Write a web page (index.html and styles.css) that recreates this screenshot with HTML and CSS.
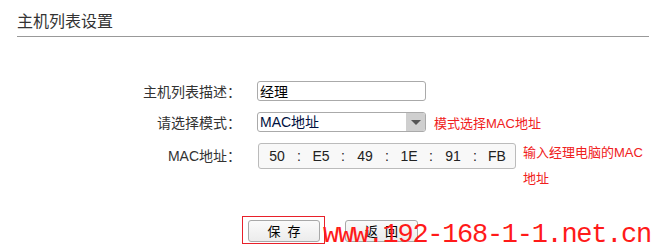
FILE: index.html
```html
<!DOCTYPE html>
<html lang="zh-CN">
<head>
  <meta charset="UTF-8">
  <title>主机列表设置</title>
  <link rel="stylesheet" href="styles.css">
</head>
<body>
  <div class="titulo">主机列表设置</div>

  <!-- Formulario -->
  <form class="formulario">
    <div class="fila">
      <label class="etiqueta" for="descripcion">主机列表描述：</label>
      <input type="text" id="descripcion" class="campo" value="经理">
    </div>

    <div class="fila">
      <label class="etiqueta" for="modo">请选择模式：</label>
      <div class="selector">
        <select id="modo" class="campo">
          <option>MAC地址</option>
        </select>
        <span class="flecha"></span>
      </div>
      <span class="nota">模式选择MAC地址</span>
    </div>

    <div class="fila fila-mac">
      <label class="etiqueta">MAC地址：</label>
      <div class="mac">
        <span class="par">50</span><span class="sep">:</span>
        <span class="par">E5</span><span class="sep">:</span>
        <span class="par">49</span><span class="sep">:</span>
        <span class="par">1E</span><span class="sep">:</span>
        <span class="par">91</span><span class="sep">:</span>
        <span class="par">FB</span>
      </div>
      <span class="nota nota-mac">输入经理电脑的MAC地址</span>
    </div>

    <div class="botones">
      <span class="marca"><button type="button">保存</button></span>
      <button type="button">返回</button>
    </div>
  </form>

  <div class="sello">www.192-168-1-1.net.cn</div>
</body>
</html>
```

FILE: styles.css
```css
body {
  margin: 0;
  font-family: "Liberation Sans", "Noto Sans CJK SC", sans-serif;
  background-color: #fff;
  color: #333;
  position: relative;
  height: 251px;
  overflow: hidden;
}

.titulo {
  margin: 0 9px 0 17px;
  padding-top: 11px;
  height: 25px;
  font-size: 16px;
  line-height: 22px;
  color: #333;
  border-bottom: 1px solid #999;
}

.formulario {
  margin-top: 44px;
}

.fila {
  display: flex;
  align-items: center;
  margin-bottom: 11px;
}

.etiqueta {
  width: 241px;
  margin-right: 16px;
  text-align: right;
  font-size: 14px;
  color: #333;
  flex-shrink: 0;
}

.campo {
  box-sizing: border-box;
  width: 169px;
  height: 20px;
  border: 1px solid #aaa;
  border-radius: 3px;
  padding: 0 2px;
  font-family: "Liberation Sans", "Noto Sans CJK SC", sans-serif;
  font-size: 14px;
  color: #000;
  background: #fff;
  margin: 0;
}

.selector {
  position: relative;
  width: 169px;
  height: 20px;
}

.selector select {
  appearance: none;
  -webkit-appearance: none;
  color: #001040;
}

.flecha {
  position: absolute;
  right: 1px;
  top: 1px;
  width: 19px;
  height: 18px;
  background: #cfcfcf;
  border-radius: 0 2px 2px 0;
}

.flecha::after {
  content: "";
  position: absolute;
  left: 5px;
  top: 7px;
  border-left: 5px solid transparent;
  border-right: 5px solid transparent;
  border-top: 5px solid #555;
}

.nota {
  margin-left: 8px;
  font-size: 13px;
  color: #f02020;
}

.fila-mac {
  align-items: flex-start;
  margin-bottom: 0;
}

.fila-mac .etiqueta {
  line-height: 26px;
}

.mac {
  box-sizing: border-box;
  width: 258px;
  height: 26px;
  margin-left: 1px;
  padding-left: 3px;
  border: 1px solid #bbb;
  border-radius: 3px;
  background: #f8f8f8;
  display: flex;
  align-items: center;
  font-size: 14px;
  color: #222;
}

.par {
  width: 30px;
  text-align: center;
}

.sep {
  width: 14px;
  text-align: center;
}

.nota-mac {
  width: 128px;
  margin-left: 7px;
  margin-top: -3px;
  line-height: 26px;
}

.botones {
  display: flex;
  align-items: flex-start;
  margin-top: 24px;
  padding-left: 242px;
}

.marca {
  display: inline-block;
  border: 1px solid #e8202a;
  padding: 3px 4px 1px 5px;
  margin-right: 20px;
}

button {
  box-sizing: border-box;
  width: 73px;
  height: 22px;
  padding: 0 0 0 7px;
  border: 1px solid #a8a8a8;
  border-radius: 3px;
  background: linear-gradient(#fafafa, #ececec);
  font-family: "Noto Sans CJK SC", sans-serif;
  font-size: 13px;
  line-height: 20px;
  letter-spacing: 7px;
  color: #000;
  cursor: pointer;
}

.marca button {
  width: 72px;
}

.botones > button {
  margin-top: 4px;
}

.sello {
  position: absolute;
  left: 323px;
  top: 220px;
  font-family: "Liberation Mono", monospace;
  font-size: 27px;
  letter-spacing: -1.3px;
  line-height: 30px;
  color: #ff1a1a;
  white-space: nowrap;
}
```
